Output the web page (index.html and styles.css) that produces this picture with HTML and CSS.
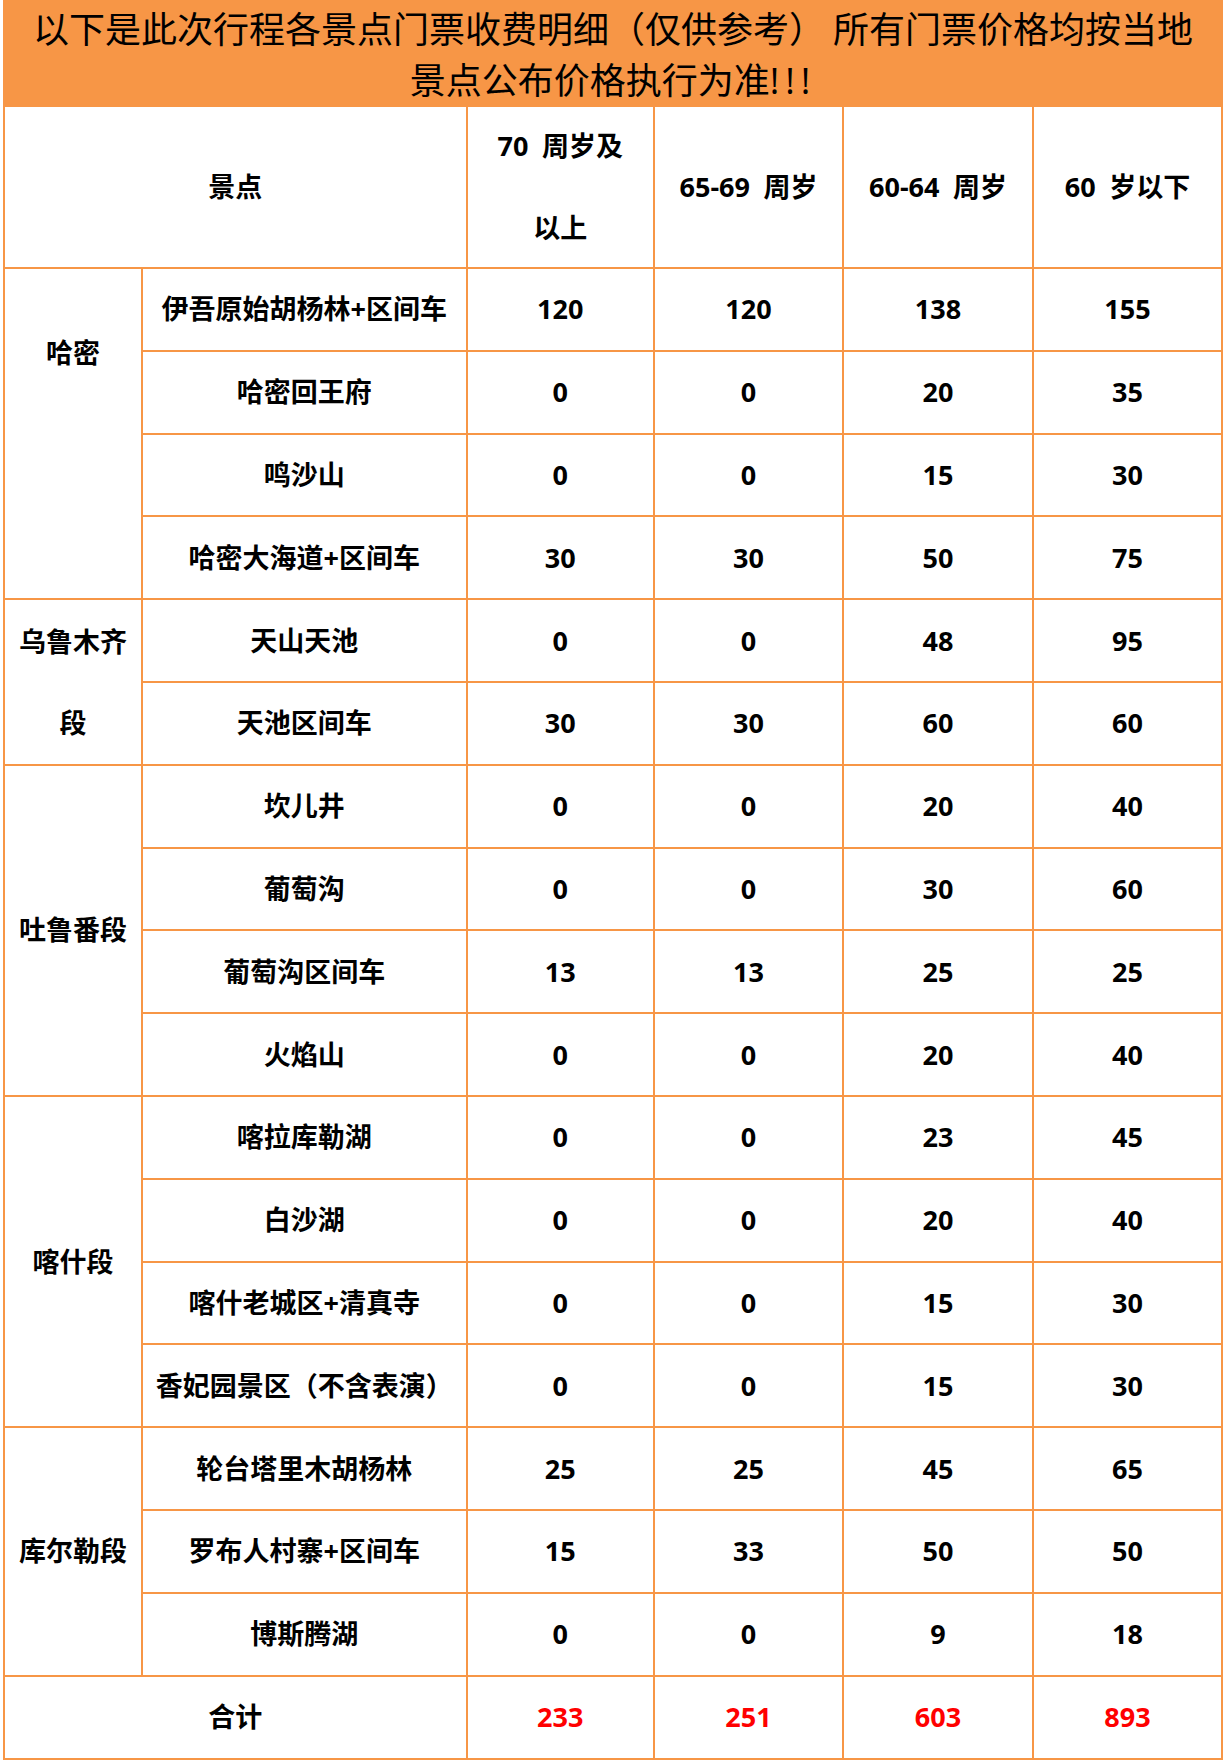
FILE: index.html
```html
<!DOCTYPE html>
<html lang="zh-CN">
<head>
<meta charset="utf-8">
<title>景点门票收费明细</title>
<link rel="stylesheet" href="styles.css">
</head>
<body>
<div class="sheet">
  <div class="banner"><p class="banner-text">以下是此次行程各景点门票收费明细（仅供参考） 所有门票价格均按当地<br>景点公布价格执行为准<span class="bang">!!!</span></p></div>

  <div class="cell head span2">景点</div>
  <div class="cell head tall">70&ensp;周岁及<br>以上</div>
  <div class="cell head">65-69&ensp;周岁</div>
  <div class="cell head">60-64&ensp;周岁</div>
  <div class="cell head">60&ensp;岁以下</div>

  <div class="cell group rows4 g-hami">哈密</div>
  <div class="cell">伊吾原始胡杨林+区间车</div><div class="cell">120</div><div class="cell">120</div><div class="cell">138</div><div class="cell">155</div>
  <div class="cell">哈密回王府</div><div class="cell">0</div><div class="cell">0</div><div class="cell">20</div><div class="cell">35</div>
  <div class="cell">鸣沙山</div><div class="cell">0</div><div class="cell">0</div><div class="cell">15</div><div class="cell">30</div>
  <div class="cell">哈密大海道+区间车</div><div class="cell">30</div><div class="cell">30</div><div class="cell">50</div><div class="cell">75</div>

  <div class="cell group rows2 g-two">乌鲁木齐<br>段</div>
  <div class="cell">天山天池</div><div class="cell">0</div><div class="cell">0</div><div class="cell">48</div><div class="cell">95</div>
  <div class="cell">天池区间车</div><div class="cell">30</div><div class="cell">30</div><div class="cell">60</div><div class="cell">60</div>

  <div class="cell group rows4">吐鲁番段</div>
  <div class="cell">坎儿井</div><div class="cell">0</div><div class="cell">0</div><div class="cell">20</div><div class="cell">40</div>
  <div class="cell">葡萄沟</div><div class="cell">0</div><div class="cell">0</div><div class="cell">30</div><div class="cell">60</div>
  <div class="cell">葡萄沟区间车</div><div class="cell">13</div><div class="cell">13</div><div class="cell">25</div><div class="cell">25</div>
  <div class="cell">火焰山</div><div class="cell">0</div><div class="cell">0</div><div class="cell">20</div><div class="cell">40</div>

  <div class="cell group rows4">喀什段</div>
  <div class="cell">喀拉库勒湖</div><div class="cell">0</div><div class="cell">0</div><div class="cell">23</div><div class="cell">45</div>
  <div class="cell">白沙湖</div><div class="cell">0</div><div class="cell">0</div><div class="cell">20</div><div class="cell">40</div>
  <div class="cell">喀什老城区+清真寺</div><div class="cell">0</div><div class="cell">0</div><div class="cell">15</div><div class="cell">30</div>
  <div class="cell">香妃园景区（不含表演）</div><div class="cell">0</div><div class="cell">0</div><div class="cell">15</div><div class="cell">30</div>

  <div class="cell group rows3">库尔勒段</div>
  <div class="cell">轮台塔里木胡杨林</div><div class="cell">25</div><div class="cell">25</div><div class="cell">45</div><div class="cell">65</div>
  <div class="cell">罗布人村寨+区间车</div><div class="cell">15</div><div class="cell">33</div><div class="cell">50</div><div class="cell">50</div>
  <div class="cell">博斯腾湖</div><div class="cell">0</div><div class="cell">0</div><div class="cell">9</div><div class="cell">18</div>

  <div class="cell span2">合计</div>
  <div class="cell total">233</div><div class="cell total">251</div><div class="cell total">603</div><div class="cell total">893</div>
</div>
</body>
</html>
```

FILE: styles.css
```css
html, body {
  margin: 0;
  padding: 0;
  background: #ffffff;
}

body {
  font-family: "Open Sans", "Noto Sans CJK SC", sans-serif;
  color: #000000;
}

.sheet {
  display: grid;
  grid-template-columns: 136px 322.5px 185.5px 187px 188px 187px;
  grid-template-rows: 103px 160px repeat(17, 80.8px) 81px;
  gap: 2px;
  padding: 2px;
  width: max-content;
  margin-left: 3px;
  background: #f79646;
}

.banner {
  grid-column: 1 / -1;
  background: #f79646;
  display: flex;
  align-items: center;
  justify-content: center;
}

.banner-text {
  margin: 0;
  text-align: center;
  font-family: "Noto Sans CJK SC", sans-serif;
  font-size: 36px;
  font-weight: 400;
  line-height: 51px;
  color: #000000;
  white-space: nowrap;
}

.bang {
  font-family: "Open Sans", sans-serif;
  letter-spacing: 6px;
}

.cell {
  background: #ffffff;
  display: flex;
  align-items: center;
  justify-content: center;
  text-align: center;
  font-size: 27px;
  font-weight: 700;
  line-height: 36px;
  white-space: nowrap;
}

.span2 {
  grid-column: span 2;
}

.rows2 { grid-row: span 2; }
.rows3 { grid-row: span 3; }
.rows4 { grid-row: span 4; }

.head.tall {
  line-height: 82px;
}

.g-two {
  line-height: 81px;
}

.g-hami {
  align-items: flex-start;
  padding-top: 66px;
}

.total {
  color: #ff0000;
}
```
